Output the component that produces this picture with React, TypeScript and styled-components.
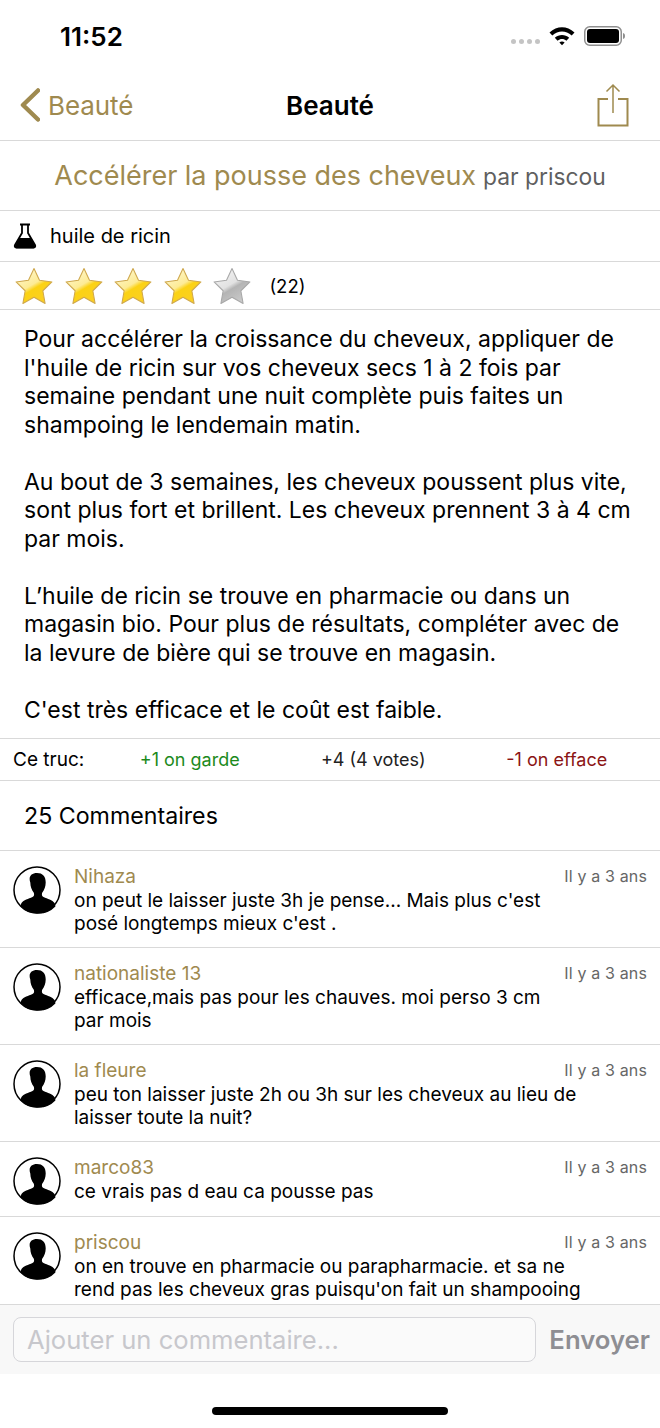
import styled, { createGlobalStyle } from "styled-components";

const GOLD = "#9f8a4f";
const LINE = "#d9d9d9";

const GlobalStyle = createGlobalStyle`
  html, body { margin: 0; padding: 0; background: #fff; }
  body { font-family: Inter, "Liberation Sans", sans-serif; color: #000; }
`;

const Page = styled.div`
  width: 660px;
  height: 1428px;
  display: flex;
  flex-direction: column;
  overflow: hidden;
`;

const StatusBar = styled.div`
  height: 70px;
  flex: none;
  display: flex;
  align-items: center;
  justify-content: space-between;
  padding: 2px 34px 0 60px;
  box-sizing: border-box;
`;

const Clock = styled.span`
  font-size: 26px;
  font-weight: 600;
`;

const StatusIcons = styled.div`
  display: flex;
  align-items: center;
  gap: 9px;
`;

const Signal = styled.div`
  display: flex;
  gap: 3px;
  margin-top: 10px;
`;

const Dot = styled.span`
  width: 5px;
  height: 5px;
  border-radius: 50%;
  background: #c4c4c4;
`;

const NavBar = styled.div`
  height: 71px;
  flex: none;
  display: grid;
  grid-template-columns: 1fr auto 1fr;
  align-items: center;
  padding: 0 20px;
  border-bottom: 1px solid ${LINE};
  box-sizing: border-box;
`;

const BackLink = styled.div`
  display: flex;
  align-items: center;
  gap: 8px;
  color: ${GOLD};
  font-size: 26px;
  letter-spacing: -0.1px;
`;

const NavTitle = styled.div`
  font-size: 26px;
  font-weight: 600;
`;

const ShareButton = styled.div`
  justify-self: end;
  display: flex;
  margin-right: 11px;
`;

const TitleRow = styled.div`
  height: 70px;
  flex: none;
  display: flex;
  align-items: center;
  justify-content: center;
  gap: 7px;
  border-bottom: 1px solid ${LINE};
  box-sizing: border-box;
`;

const TipTitle = styled.span`
  color: ${GOLD};
  font-size: 27px;
  letter-spacing: -0.02px;
`;

const Author = styled.span`
  color: #5f5f5f;
  font-size: 22.8px;
  margin-top: 2px;
`;

const IngredientRow = styled.div`
  height: 51px;
  flex: none;
  display: flex;
  align-items: center;
  gap: 13px;
  padding-left: 13px;
  font-size: 20px;
  border-bottom: 1px solid ${LINE};
  box-sizing: border-box;
`;

const RatingRow = styled.div`
  height: 48px;
  flex: none;
  display: flex;
  align-items: center;
  padding-left: 15px;
  border-bottom: 1px solid ${LINE};
  box-sizing: border-box;
`;

const Stars = styled.div`
  display: flex;
  gap: 11.6px;
`;

const RatingCount = styled.span`
  margin-left: 18px;
  font-size: 18.5px;
`;

const Body = styled.div`
  height: 429px;
  flex: none;
  padding: 15px 24px 0;
  font-size: 23px;
  line-height: 28.5px;
  border-bottom: 1px solid ${LINE};
  box-sizing: border-box;
`;

const Paragraph = styled.div`
  margin: 0 0 28.5px;
  white-space: nowrap;
`;

const VoteRow = styled.div`
  height: 42px;
  flex: none;
  display: grid;
  grid-template-columns: 85px repeat(3, 183.5px);
  align-items: center;
  padding-left: 13px;
  font-size: 18px;
  border-bottom: 1px solid ${LINE};
  box-sizing: border-box;
`;

const VoteLabel = styled.span`
  font-size: 19px;
`;

const Vote = styled.span<{ $tone: string }>`
  color: ${(p) => p.$tone};
  text-align: center;
`;

const CommentsHeader = styled.div`
  height: 70px;
  flex: none;
  display: flex;
  align-items: center;
  padding-left: 24px;
  font-size: 23.2px;
  border-bottom: 1px solid ${LINE};
  box-sizing: border-box;
`;

const CommentList = styled.div`
  flex: 1;
  min-height: 0;
  overflow: hidden;
`;

const Comment = styled.div<{ $height: number }>`
  display: flex;
  gap: 13px;
  padding: 15px 13px 0;
  border-bottom: 1px solid ${LINE};
  box-sizing: border-box;
  height: ${(p) => p.$height}px;
`;

const CommentMain = styled.div`
  flex: 1;
  min-width: 0;
  margin-top: -1px;
`;

const CommentHead = styled.div`
  display: flex;
  justify-content: space-between;
  align-items: center;
  height: 22px;
  margin-bottom: 3px;
`;

const UserName = styled.span`
  color: ${GOLD};
  font-size: 19px;
`;

const CommentDate = styled.span`
  color: #666;
  font-size: 16px;
  letter-spacing: 0.15px;
`;

const CommentText = styled.div`
  font-size: 19px;
  line-height: 22.5px;
  white-space: nowrap;
`;

const InputBar = styled.div`
  height: 70px;
  flex: none;
  display: flex;
  align-items: center;
  gap: 13px;
  padding: 0 10px 0 13px;
  background: #f8f8f8;
  border-top: 1px solid ${LINE};
  box-sizing: border-box;
`;

const Field = styled.div`
  flex: 1;
  height: 45px;
  display: flex;
  align-items: center;
  padding-left: 13px;
  background: #fafafa;
  border: 1px solid #d6d6da;
  border-radius: 8px;
  color: #c7c7cc;
  font-size: 25.6px;
  box-sizing: border-box;
`;

const SendButton = styled.span`
  color: #8e8e93;
  font-size: 25.7px;
  font-weight: 600;
`;

const HomeArea = styled.div`
  height: 54px;
  flex: none;
  display: flex;
  justify-content: center;
  padding-top: 33px;
  box-sizing: border-box;
`;

const HomeIndicator = styled.div`
  width: 236px;
  height: 8px;
  border-radius: 4px;
  background: #000;
`;

function WifiIcon() {
  return (
    <svg width="26" height="20" viewBox="0 0 26 20">
      <path d="M0.500 6.500C8 -0.500 18 -0.500 25.500 6.500l-2.800 3C16.800 4.200 9.200 4.200 3.300 9.500z" />
      <path d="M5.800 11.800c4.200-3.800 10.200-3.800 14.400 0l-2.800 2.900c-2.600-2.200-6.200-2.200-8.800 0z" />
      <path d="M10.400 16.400c1.500-1.300 3.700-1.300 5.200 0L13 19.200z" />
    </svg>
  );
}

function BatteryIcon() {
  return (
    <svg width="42" height="20" viewBox="0 0 42 20">
      <rect x="0.750" y="0.750" width="36.500" height="18.500" rx="5" fill="none" stroke="#8f8f8f" strokeWidth="1.500" />
      <rect x="3" y="3" width="32" height="14" rx="3" fill="#000" />
      <path d="M39 7c1.500.400 2 1.500 2 3s-.500 2.600-2 3z" fill="#8f8f8f" />
    </svg>
  );
}

function BackChevron() {
  return (
    <svg width="20" height="34" viewBox="0 0 20 34" fill="none" stroke={GOLD} strokeWidth="4.500" strokeLinecap="round" strokeLinejoin="round">
      <path d="M18 2.500 3 17l15 14.500" />
    </svg>
  );
}

function ShareIcon() {
  return (
    <svg width="32" height="44" viewBox="0 0 32 44" fill="none" stroke={GOLD} strokeWidth="1.500">
      <path d="M11 16H1.500v26.500h29V16H21" strokeWidth="2" />
      <path d="M16 30V2M9.500 8.500 16 2l6.500 6.500" />
    </svg>
  );
}

function FlaskIcon() {
  return (
    <svg width="24" height="26" viewBox="0 0 24 26">
      <path d="M7 1.500h10M9 2v8L2 22c-.700 1.400 0 2.500 1.500 2.500h17c1.500 0 2.200-1.100 1.500-2.500L15 10V2" fill="none" stroke="#000" strokeWidth="1.800" />
      <path d="M6.300 15h11.400l4.800 8.500c0 1-.800 1.800-2 1.800h-17c-1.200 0-2-.800-2-1.800z" fill="#000" />
    </svg>
  );
}

const STAR_PATH =
  "M18 1.500 23.200 12.600 35 14.200 26.400 22.500 28.500 34.500 18 28.700 7.500 34.500 9.600 22.500 1 14.200 12.800 12.600z";

function StarIcon({ id, on }: { id: string; on: boolean }) {
  return (
    <svg width="38" height="38" viewBox="0 0 36 36">
      <defs>
        <linearGradient id={id} x1="0.200" y1="0" x2="0.800" y2="1">
          <stop offset="0" stopColor={on ? "#fff8d2" : "#f4f4f4"} />
          <stop offset="0.450" stopColor={on ? "#fdeb96" : "#e2e2e2"} />
          <stop offset="0.560" stopColor={on ? "#fbd214" : "#b4b4b4"} />
          <stop offset="1" stopColor={on ? "#fbcf25" : "#cdcdcd"} />
        </linearGradient>
      </defs>
      <path d={STAR_PATH} fill={`url(#${id})`} stroke={on ? "#cfa84e" : "#a8a8a8"} strokeWidth="1" strokeLinejoin="round" />
    </svg>
  );
}

function Avatar() {
  return (
    <svg width="48" height="48" viewBox="0 0 48 48" style={{ flex: "none" }}>
      <circle cx="24" cy="24" r="23" fill="#fff" stroke="#000" strokeWidth="1.500" />
      <path
        d="M24 7c5.800 0 8.800 3.500 8.700 9.500-.100 4-1.300 7.500-3.500 10.300-.600 1.800-.300 3.400 1.300 4.200 4 1.900 9 2.900 11 6 .700 1.100.900 2.600.900 3.500A23 23 0 0 1 24 47.500 23 23 0 0 1 7.600 40.500c0-.900.200-2.400.900-3.500 2-3.100 7-4.100 11-6 1.600-.800 1.900-2.400 1.300-4.200-2.200-2.800-3.400-6.300-3.500-10.300C15.200 10.500 18.200 7 24 7z"
        fill="#000"
      />
    </svg>
  );
}

const COMMENTS = [
  { name: "Nihaza", height: 97, lines: ["on peut le laisser juste 3h je pense... Mais plus c'est", "posé longtemps mieux c'est ."] },
  { name: "nationaliste 13", height: 97, lines: ["efficace,mais pas pour les chauves. moi perso 3 cm", "par mois"] },
  { name: "la fleure", height: 97, lines: ["peu ton laisser juste 2h ou 3h sur les cheveux au lieu de", "laisser toute la nuit?"] },
  { name: "marco83", height: 75, lines: ["ce vrais pas d eau ca pousse pas"] },
  { name: "priscou", height: 97, lines: ["on en trouve en pharmacie ou parapharmacie. et sa ne", "rend pas les cheveux gras puisqu'on fait un shampooing"] },
];

const PARAGRAPHS = [
  ["Pour accélérer la croissance du cheveux, appliquer de", "l'huile de ricin sur vos cheveux secs 1 à 2 fois par", "semaine pendant une nuit complète puis faites un", "shampoing le lendemain matin."],
  ["Au bout de 3 semaines, les cheveux poussent plus vite,", "sont plus fort et brillent. Les cheveux prennent 3 à 4 cm", "par mois."],
  ["L’huile de ricin se trouve en pharmacie ou dans un", "magasin bio. Pour plus de résultats, compléter avec de", "la levure de bière qui se trouve en magasin."],
  ["C'est très efficace et le coût est faible."],
];

export default function App() {
  return (
    <Page>
      <GlobalStyle />
      <StatusBar>
        <Clock>11:52</Clock>
        <StatusIcons>
          <Signal>
            <Dot />
            <Dot />
            <Dot />
            <Dot />
          </Signal>
          <WifiIcon />
          <BatteryIcon />
        </StatusIcons>
      </StatusBar>
      <NavBar>
        <BackLink>
          <BackChevron />
          Beauté
        </BackLink>
        <NavTitle>Beauté</NavTitle>
        <ShareButton>
          <ShareIcon />
        </ShareButton>
      </NavBar>
      <TitleRow>
        <TipTitle>Accélérer la pousse des cheveux</TipTitle>
        <Author>par priscou</Author>
      </TitleRow>
      <IngredientRow>
        <FlaskIcon />
        huile de ricin
      </IngredientRow>
      <RatingRow>
        <Stars>
          {[1, 2, 3, 4, 5].map((n) => (
            <StarIcon key={n} id={`star-${n}`} on={n < 5} />
          ))}
        </Stars>
        <RatingCount>(22)</RatingCount>
      </RatingRow>
      <Body>
        {PARAGRAPHS.map((lines, i) => (
          <Paragraph key={i}>
            {lines.map((line, j) => (
              <div key={j}>{line}</div>
            ))}
          </Paragraph>
        ))}
      </Body>
      <VoteRow>
        <VoteLabel>Ce truc:</VoteLabel>
        <Vote $tone="#1c8a1c">+1 on garde</Vote>
        <Vote $tone="#222">+4 (4 votes)</Vote>
        <Vote $tone="#8b1414">-1 on efface</Vote>
      </VoteRow>
      <CommentsHeader>25 Commentaires</CommentsHeader>
      <CommentList>
        {COMMENTS.map((c) => (
          <Comment key={c.name} $height={c.height}>
            <Avatar />
            <CommentMain>
              <CommentHead>
                <UserName>{c.name}</UserName>
                <CommentDate>Il y a 3 ans</CommentDate>
              </CommentHead>
              {c.lines.map((line) => (
                <CommentText key={line}>{line}</CommentText>
              ))}
            </CommentMain>
          </Comment>
        ))}
      </CommentList>
      <InputBar>
        <Field>Ajouter un commentaire...</Field>
        <SendButton>Envoyer</SendButton>
      </InputBar>
      <HomeArea>
        <HomeIndicator />
      </HomeArea>
    </Page>
  );
}
